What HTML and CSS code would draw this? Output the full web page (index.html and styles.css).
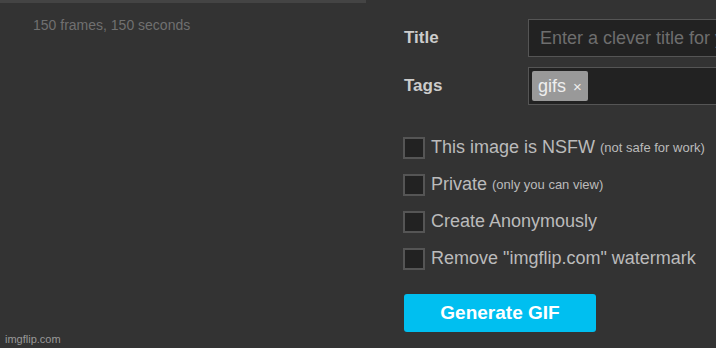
FILE: index.html
```html
<!DOCTYPE html>
<html lang="en">
<head>
    <meta charset="UTF-8">
    <title>Make a GIF</title>
    <link rel="stylesheet" href="styles.css">
</head>
<body>
    <div class="page">
        <div class="preview">
            <div class="preview-edge"></div>
            <div class="preview-info">150 frames, 150 seconds</div>
        </div>
        <div class="options">
            <div class="row">
                <label class="row-label" for="title">Title</label>
                <input class="text-input" type="text" id="title" placeholder="Enter a clever title for your GIF">
            </div>
            <div class="row">
                <label class="row-label">Tags</label>
                <div class="text-input tags">
                    <span class="tag">gifs <span class="tag-x">×</span></span>
                </div>
            </div>
            <div class="checks">
                <label class="check"><span class="box"></span>This image is NSFW <small>(not safe for work)</small></label>
                <label class="check"><span class="box"></span>Private <small>(only you can view)</small></label>
                <label class="check"><span class="box"></span>Create Anonymously</label>
                <label class="check"><span class="box"></span>Remove "imgflip.com" watermark</label>
            </div>
            <button class="generate">Generate GIF</button>
        </div>
    </div>
    <div class="watermark">imgflip.com</div>
</body>
</html>
```

FILE: styles.css
```css
body {
    margin: 0;
    background-color: #333;
    font-family: "Liberation Sans", Arial, sans-serif;
    overflow: hidden;
    height: 348px;
}
.page {
    display: flex;
}
.preview {
    width: 366px;
    flex-shrink: 0;
}
.preview-edge {
    height: 3px;
    background-color: #444;
}
.preview-info {
    padding: 14px 0 0 33px;
    font-size: 14px;
    color: #707070;
}
.options {
    padding: 19px 0 0 38px;
    flex-shrink: 0;
}
.row {
    display: flex;
    align-items: center;
    margin-bottom: 10px;
}
.row-label {
    width: 124px;
    font-size: 17px;
    font-weight: bold;
    color: #ccc;
}
.text-input {
    box-sizing: border-box;
    width: 260px;
    height: 38px;
    background-color: #222;
    border: 1px solid #555;
    padding: 0 11px;
    font-family: inherit;
    font-size: 18px;
    color: #ccc;
    outline: none;
}
.text-input::placeholder {
    color: #6e6e6e;
}
.tags {
    display: flex;
    align-items: center;
    padding: 0 3px;
}
.tag {
    background-color: #999;
    color: #eee;
    border-radius: 2px;
    padding: 0 6px;
    height: 30px;
    line-height: 30px;
    font-size: 18px;
}
.tag-x {
    font-size: 15px;
    margin-left: 2px;
}
.checks {
    padding-top: 14px;
}
.check {
    display: flex;
    align-items: center;
    height: 37px;
    font-size: 18px;
    color: #bbb;
}
.check small {
    font-size: 13px;
    margin-left: 5px;
}
.box {
    box-sizing: border-box;
    width: 22px;
    height: 22px;
    background-color: #222;
    border: 2px solid #555;
    margin: 0 6px 0 -1px;
}
.generate {
    margin-top: 17px;
    width: 192px;
    height: 38px;
    background-color: #00bff0;
    border: none;
    border-radius: 3px;
    color: #fff;
    font-family: inherit;
    font-size: 19px;
    font-weight: bold;
}
.watermark {
    position: absolute;
    left: 5px;
    bottom: 3px;
    font-size: 11px;
    color: #999;
}
```
